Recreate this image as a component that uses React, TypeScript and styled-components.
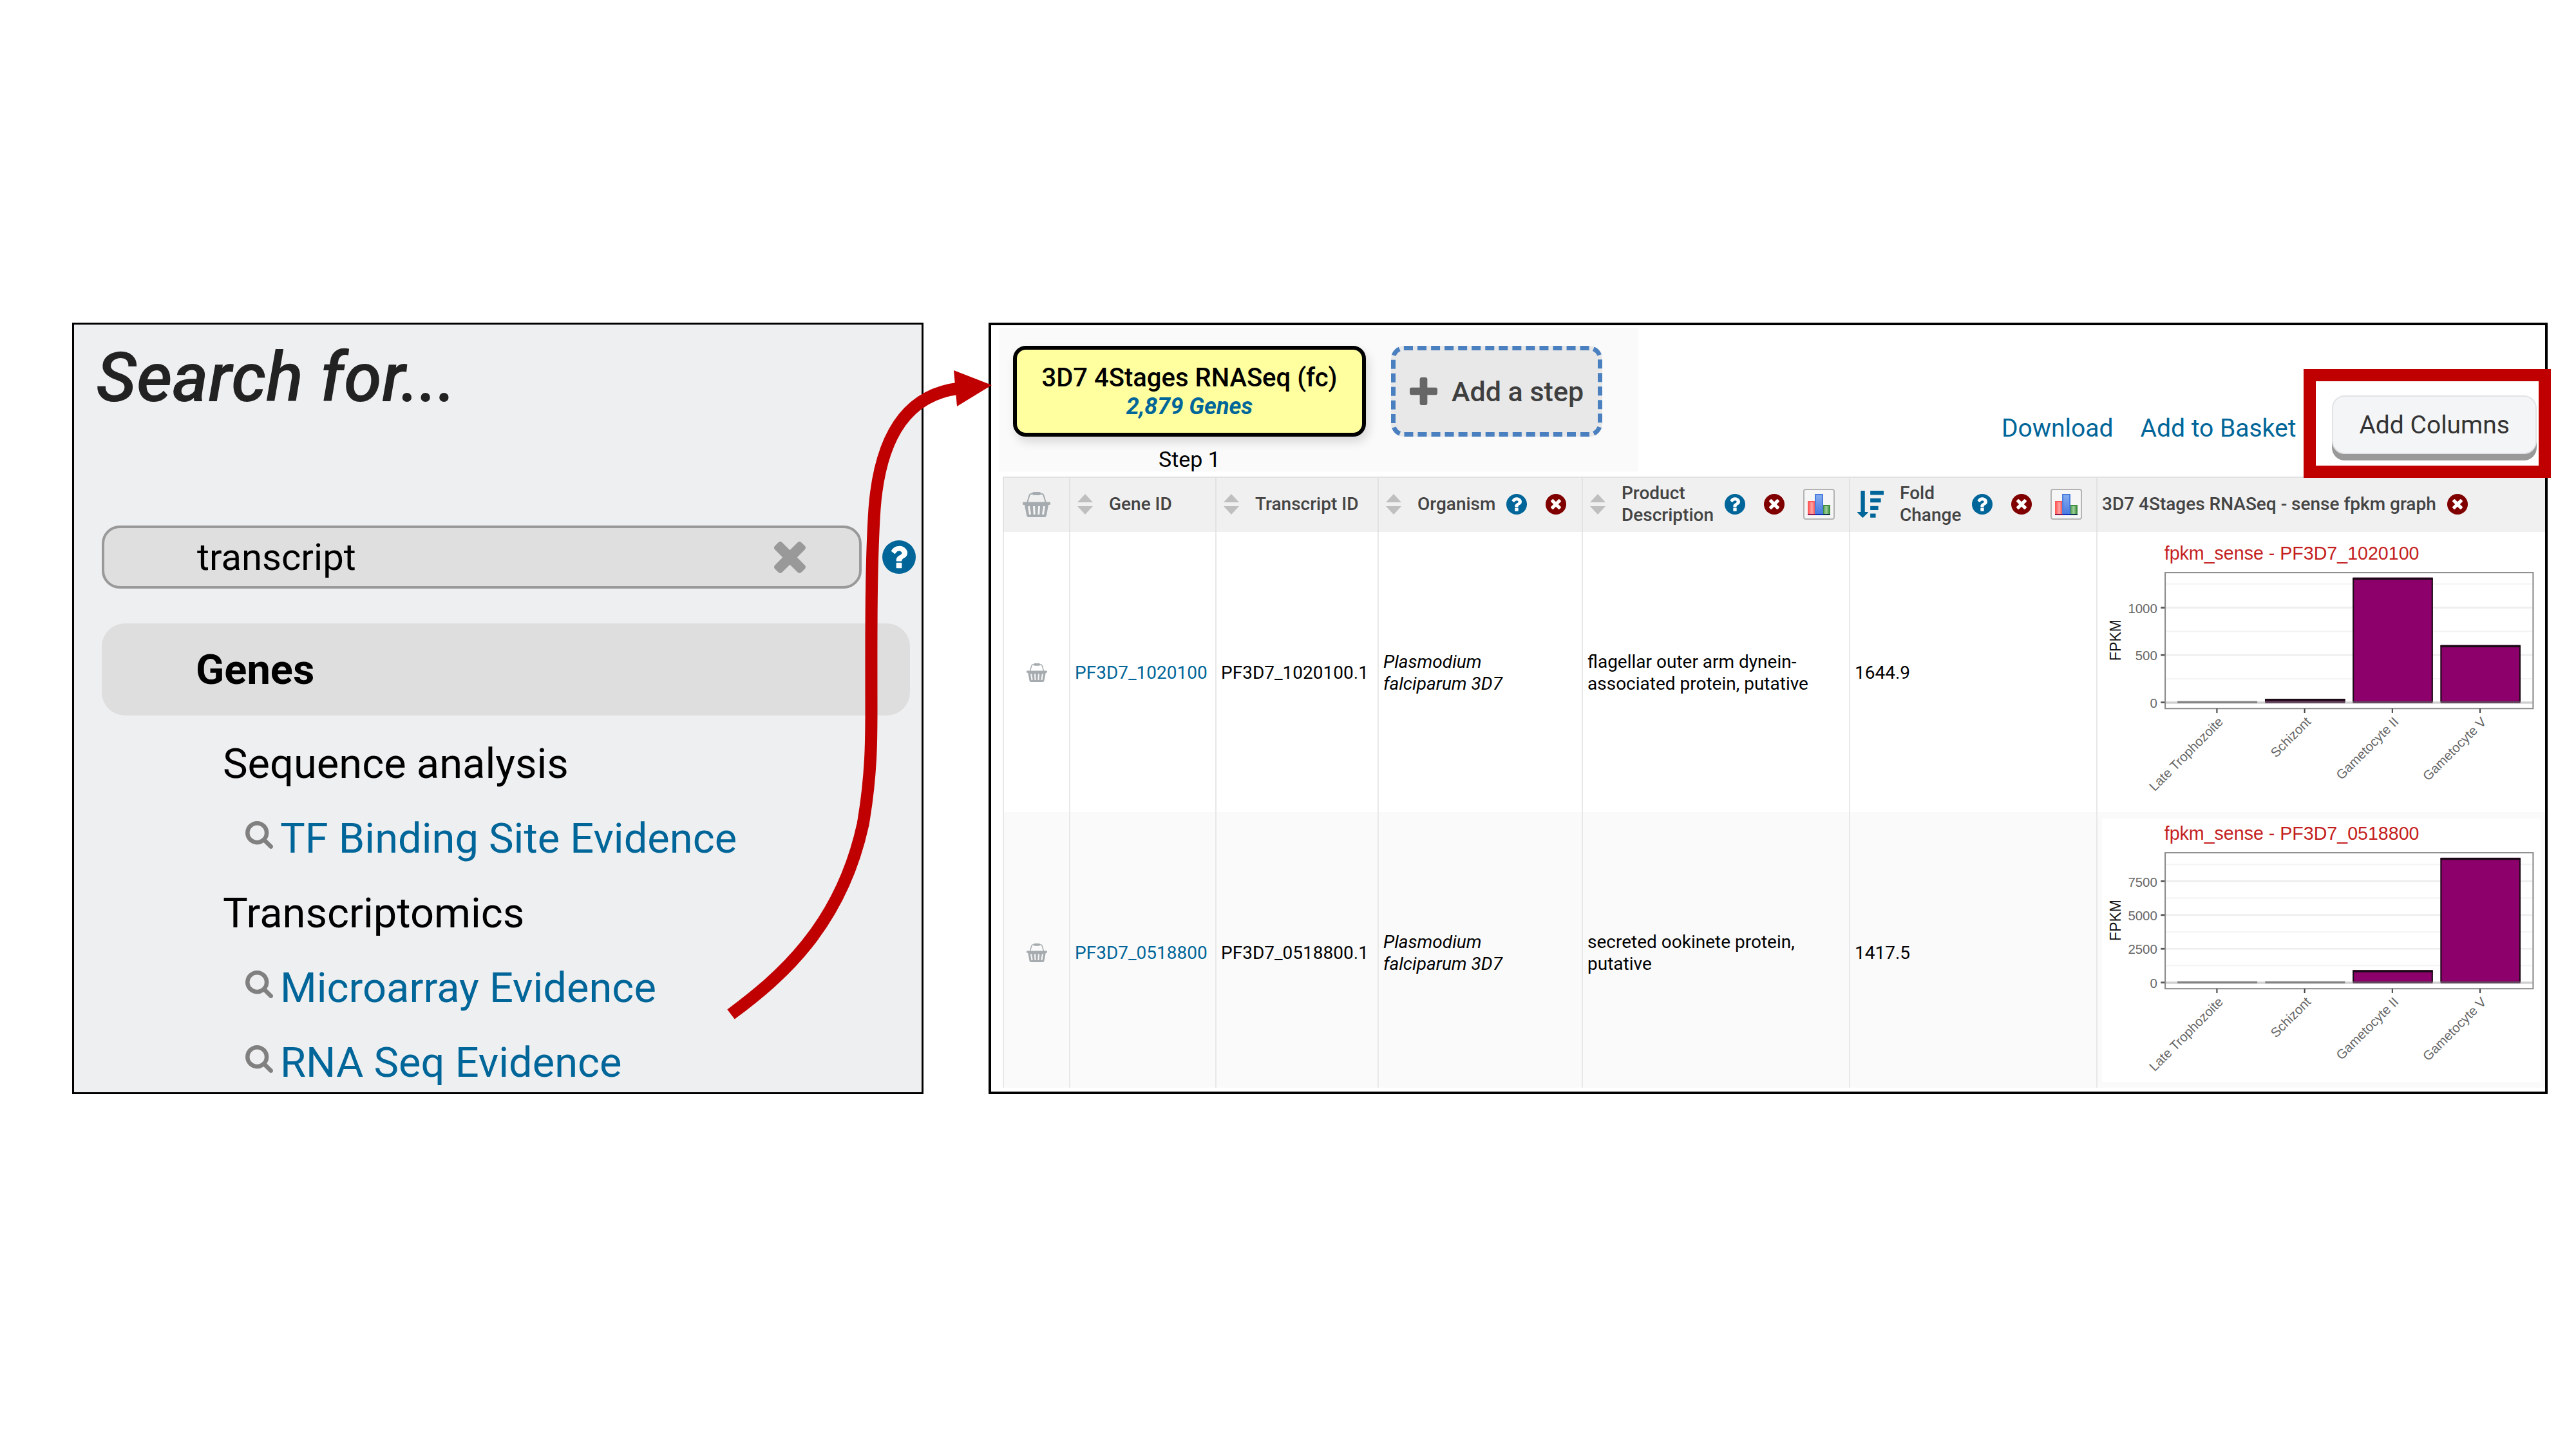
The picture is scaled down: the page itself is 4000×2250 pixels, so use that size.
import React from "react";
import styled, { createGlobalStyle } from "styled-components";

const GlobalStyle = createGlobalStyle`
  *, *::before, *::after { box-sizing: border-box; }
  body { margin: 0; background: #fff; font-family: Roboto, "Liberation Sans", sans-serif; color: #000; }
  button, input { font-family: inherit; }
  button { border: 0; background: none; padding: 0; cursor: pointer; }
  svg { display: block; flex: none; }
  a { text-decoration: none; }
`;

const LINK = "#069";
const ACCENT = "#c00000";

/* ---------- icons ---------- */

const HelpIcon = ({ size = 32 }: { size?: number }) => (
  <svg width={size} height={size} viewBox="128 128 1536 1536" aria-hidden="true">
    <circle cx="896" cy="896" r="768" fill={LINK} />
    <path
      fill="#fff"
      d="M1024 1376v-192q0-14-9-23t-23-9h-192q-14 0-23 9t-9 23v192q0 14 9 23t23 9h192q14 0 23-9t9-23zm256-672q0-88-55.500-163t-138.500-116-170-41q-243 0-371 213-15 24 8 42l132 100q7 6 19 6 16 0 25-12 53-68 86-92 34-24 86-24 48 0 85.500 26t37.500 59q0 38-20 61t-68 45q-63 28-115.500 86.500t-52.500 125.500v36q0 14 9 23t23 9h192q14 0 23-9t9-23q0-19 21.500-49.500t54.500-49.500q32-18 49-28.500t46-35 44.500-48 28-60.500 12.500-81z"
    />
  </svg>
);

const RemoveIcon = () => (
  <svg width="32" height="32" viewBox="128 128 1536 1536" aria-hidden="true">
    <circle cx="896" cy="896" r="768" fill="#800000" />
    <path
      fill="#fff"
      d="M1277 1122q0-26-19-45l-181-181 181-181q19-19 19-45 0-27-19-46l-90-90q-19-19-46-19-26 0-45 19l-181 181-181-181q-19-19-45-19-27 0-46 19l-90 90q-19 19-19 46 0 26 19 45l181 181-181 181q-19 19-19 45 0 27 19 46l90 90q19 19 46 19 26 0 45-19l181-181 181 181q19 19 45 19 27 0 46-19l90-90q19-19 19-46z"
    />
  </svg>
);

const ClearIcon = () => (
  <svg width="49" height="49" viewBox="302 366 1188 1188" fill="#999" aria-hidden="true">
    <path d="M1490 1322q0 40-28 68l-136 136q-28 28-68 28t-68-28l-294-294-294 294q-28 28-68 28t-68-28l-136-136q-28-28-28-68t28-68l294-294-294-294q-28-28-28-68t28-68l136-136q28-28 68-28t68 28l294 294 294-294q28-28 68-28t68 28l136 136q28 28 28 68t-28 68l-294 294 294 294q28 28 28 68z" />
  </svg>
);

const SearchIcon = () => (
  <svg width="43" height="43" viewBox="64 128 1664 1664" fill="#808080" aria-hidden="true">
    <path d="M1216 832q0-185-131.500-316.500t-316.500-131.500-316.500 131.500-131.500 316.500 131.500 316.500 316.500 131.500 316.500-131.500 131.500-316.500zm512 832q0 52-38 90t-90 38q-54 0-90-38l-343-342q-179 124-399 124-143 0-273.500-55.500t-225-150-150-225-55.500-273.500 55.500-273.500 150-225 225-150 273.500-55.500 273.500 55.500 225 150 150 225 55.500 273.500q0 220-124 399l343 343q37 37 37 90z" />
  </svg>
);

const PlusIcon = () => (
  <svg width="43" height="43" viewBox="192 128 1408 1408" fill="#666" aria-hidden="true">
    <path d="M1600 736v192q0 40-28 68t-68 28h-416v416q0 40-28 68t-68 28h-192q-40 0-68-28t-28-68v-416h-416q-40 0-68-28t-28-68v-192q0-40 28-68t68-28h416v-416q0-40 28-68t68-28h192q40 0 68 28t28 68v416h416q40 0 68 28t28 68z" />
  </svg>
);

const SortIcon = () => (
  <svg width="24" height="32" viewBox="0 0 24 32" fill="#bfbfbf" aria-hidden="true">
    <path d="M12 0L24 13H0zM12 32L0 19H24z" />
  </svg>
);

const SortDescIcon = () => (
  <svg width="41" height="42" viewBox="0 0 122 125" fill={LINK} aria-hidden="true">
    <path d="M16 0h19v98h14q2 2 0 4L28 123q-3 3-6 0L1 102q-2-2 0-4h15zM60 0h62v19H60zM60 35h49v19H60zM60 71h37v18H60zM60 106h25v18H60z" />
  </svg>
);

const BasketIcon = ({ width }: { width: number }) => (
  <svg width={width} height={Math.round(width * 0.9)} viewBox="0 0 43 39" aria-hidden="true">
    <path d="M7 17L10.500 5Q11.500 2.500 15 2.500H28Q31.500 2.500 32.500 5L36 17" fill="none" stroke="#a5abae" strokeWidth="2" />
    <rect x="15" y="0" width="13" height="5" rx="2" fill="#a5abae" />
    <path
      d="M1 15.500H42Q43 15.500 43 17V18.500Q43 20 41.500 20H40L37 36Q36.500 39 34 39H9Q6.500 39 6 36L3 20H1.500Q0 20 0 18.500V17Q0 15.500 1 15.500z"
      fill="#a5abae"
    />
    <path d="M9.500 22L11.500 35M17.500 22L18.200 35M25.500 22L24.800 35M33.500 22L31.500 35" stroke="#f4f4f4" strokeWidth="3" />
  </svg>
);

const HistogramIcon = () => (
  <svg width="35" height="33" viewBox="0 0 35 33" aria-hidden="true">
    <defs>
      <linearGradient id="red" x1="0" y1="0" x2="1" y2="0">
        <stop offset="0" stopColor="#ff5454" />
        <stop offset="0.5" stopColor="#ffa6a6" />
        <stop offset="1" stopColor="#f04848" />
      </linearGradient>
      <linearGradient id="blue" x1="0" y1="0" x2="0" y2="1">
        <stop offset="0" stopColor="#86aef0" />
        <stop offset="1" stopColor="#4878e0" />
      </linearGradient>
      <linearGradient id="green" x1="0" y1="0" x2="1" y2="0">
        <stop offset="0" stopColor="#4f9f4f" />
        <stop offset="0.5" stopColor="#9fd09a" />
        <stop offset="1" stopColor="#3b8a3b" />
      </linearGradient>
    </defs>
    <rect x="1" y="12" width="11" height="20" fill="url(#red)" stroke="#ff5a5a" strokeWidth="2" />
    <rect x="24" y="18" width="10" height="14" fill="url(#green)" stroke="#3f8f3f" strokeWidth="2" />
    <rect x="12" y="1" width="11" height="31" fill="url(#blue)" stroke="#4a7de0" strokeWidth="2" />
    <rect x="0" y="31" width="12" height="2" fill="#8a1850" />
    <rect x="12" y="31" width="12" height="2" fill="#1030c0" />
    <rect x="24" y="31" width="11" height="2" fill="#103050" />
  </svg>
);

/* ---------- page ---------- */

const Board = styled.main`
  display: grid;
  grid-template-columns: 1322fr 2421fr;
  column-gap: 101px;
  padding: 501px 44px 0 112px;
`;

const SearchPanel = styled.section`
  position: relative;
  border: 3px solid #000;
  background: #eeeff1;
  padding: 23px 9px 0 34px;
`;

const SearchTitle = styled.h1`
  margin: 0;
  font-size: 107px;
  line-height: 120px;
  font-weight: 500;
  font-style: italic;
  color: #222;
`;

const SearchBody = styled.div`
  padding: 169px 0 0 9px;
`;

const SearchRow = styled.form`
  display: flex;
  align-items: center;
  gap: 32px;
`;

const Field = styled.div`
  flex: 1;
  display: flex;
  align-items: center;
  height: 98px;
  padding: 0 83px 0 144px;
  border: 4px solid #999;
  border-radius: 28px;
  background: #dfdfdf;
`;

const FieldInput = styled.input`
  flex: 1;
  min-width: 0;
  padding: 0;
  border: 0;
  outline: 0;
  background: transparent;
  font-size: 58px;
  color: #000;
`;

const Category = styled.h2`
  display: flex;
  align-items: center;
  height: 143px;
  margin: 54px 9px 37px 0;
  padding-left: 146px;
  border-radius: 36px;
  background: #dedede;
  font-size: 65px;
  font-weight: 700;
`;

const Results = styled.ul`
  display: flex;
  flex-direction: column;
  gap: 40px;
  margin: 0;
  padding: 0 0 0 188px;
  list-style: none;
  font-size: 65px;
  line-height: 76px;
`;

const ResultLink = styled.a`
  display: flex;
  align-items: center;
  gap: 11px;
  padding-left: 35px;
  color: ${LINK};

  svg {
    margin-bottom: 12px;
  }
`;

const FlowArrow = styled.svg`
  position: absolute;
  top: 56px;
  right: -119px;
  z-index: 2;
  pointer-events: none;
`;

const ResultPanel = styled.section`
  border: 4px solid #000;
  background: #fff;
  padding: 4px 0 6px;
`;

const TopRow = styled.div`
  display: flex;
  justify-content: space-between;
  align-items: flex-start;
  padding: 0 13px 8px 12px;
`;

const Strategy = styled.div`
  display: flex;
  align-items: flex-start;
  gap: 39px;
  padding: 28px 56px 0 22px;
  background: #fafafa;
`;

const Step = styled.div`
  display: flex;
  flex-direction: column;
  align-items: center;
  gap: 16px;
  font-size: 34px;
  line-height: 38px;
`;

const StepBox = styled.button`
  display: flex;
  flex-direction: column;
  align-items: center;
  justify-content: center;
  width: 548px;
  height: 141px;
  padding-top: 3px;
  border: 6px solid #000;
  border-radius: 20px;
  background: #ffffa0;
  box-shadow: 4px 8px 16px rgba(0, 0, 0, 0.14);
  line-height: 44px;
`;

const StepName = styled.span`
  font-size: 40px;
  font-weight: 500;
  color: #000;
`;

const StepCount = styled.span`
  font-size: 36px;
  font-weight: 700;
  font-style: italic;
  color: ${LINK};
`;

const AddStep = styled.button`
  display: flex;
  align-items: center;
  justify-content: center;
  gap: 22px;
  width: 328px;
  height: 141px;
  border: 7px dashed #4a80c0;
  border-radius: 20px;
  background: #e8e8e8;
  font-size: 43px;
  font-weight: 500;
  color: #3f3f3f;
`;

const Actions = styled.div`
  display: flex;
  align-items: center;
  gap: 42px;
  padding-top: 105px;
  font-size: 39px;
`;

const ActionLink = styled.a`
  color: ${LINK};
`;

const Highlighted = styled.div`
  position: relative;
  margin-left: 14px;
  padding-bottom: 10px;

  &::after {
    content: "";
    position: absolute;
    inset: -41px -22px -27px -44px;
    border: 19px solid ${ACCENT};
    pointer-events: none;
  }
`;

const ColumnsButton = styled.button`
  display: block;
  height: 91px;
  padding: 0 40px;
  border: 2px solid #e2e3e6;
  border-radius: 20px;
  background: #f4f5f7;
  box-shadow: 0 10px 0 #999;
  font-size: 39px;
  color: #333;
`;

/* ---------- table ---------- */

const TableClip = styled.div`
  max-height: 949px;
  margin-left: 18px;
  overflow: hidden;
`;

const Table = styled.table`
  width: 100%;
  table-layout: fixed;
  border-collapse: separate;
  border-spacing: 0;
  font-size: 28px;
  line-height: 34px;
`;

const Col = styled.col<{ $width?: number }>`
  width: ${(p) => (p.$width ? `${p.$width}px` : "auto")};
`;

const HeadCell = styled.th`
  height: 86px;
  padding: 0 7px 2px;
  border-left: 2px solid #e2e2e2;
  border-top: 2px solid #e2e2e2;
  background: #f0f0f0;
  font-weight: 500;
  text-align: left;
  white-space: nowrap;
  color: #444;
`;

const HeadContent = styled.div<{ $centered?: boolean }>`
  display: flex;
  align-items: center;
  justify-content: ${(p) => (p.$centered ? "center" : "flex-start")};
`;

const SortButton = styled.button`
  margin: 0 25px 0 4px;
`;

const HeadTools = styled.div`
  display: flex;
  align-items: center;
  gap: 29px;
  margin-left: 17px;
`;

const HistogramButton = styled.button`
  display: flex;
  align-items: center;
  justify-content: center;
  width: 49px;
  height: 48px;
  border: 2px solid #b3b3b3;
  border-radius: 4px;
  background: #f6f6f6;
`;

const Row = styled.tr`
  background: #fff;

  &:nth-child(even) {
    background: #fafafa;
  }
`;

const Cell = styled.td`
  height: 435px;
  padding: 2px 7px 0;
  border-left: 2px solid #e8e8e8;
  vertical-align: middle;
`;

const GraphCell = styled(Cell)`
  padding-top: 10px;
  vertical-align: top;
`;

const GeneLink = styled.a`
  color: ${LINK};
`;

const BasketButton = styled.button`
  display: block;
  margin: 0 auto;
`;

const Graph = styled.svg`
  width: 100%;
  height: auto;
  background: #fff;
  font-family: "Liberation Sans", Arial, sans-serif;
`;

type ChartProps = { gene: string; unit: number; labels: number; step: number; values: number[] };

const STAGES = ["Late Trophozoite", "Schizont", "Gametocyte II", "Gametocyte V"];

const ExpressionChart = ({ gene, unit, labels, step, values }: ChartProps) => {
  const zero = 187;
  const top = 39;
  const yOf = (v: number) => zero - (v / step) * unit;
  const majors = Array.from({ length: labels }, (_, i) => i * step);
  const minors = Array.from({ length: labels }, (_, i) => (i + 0.5) * step);
  return (
    <Graph viewBox="0 0 500 300" role="img" aria-label={`FPKM bar chart for ${gene}`}>
      <text x="71" y="24" fontSize="21" fill="#c41e1e">
        fpkm_sense - {gene}
      </text>
      <text transform="translate(21 116) rotate(-90)" textAnchor="middle" fontSize="17" fill="#111">
        FPKM
      </text>
      {minors.map((v) => (
        <line key={v} x1="72" x2="491" y1={yOf(v)} y2={yOf(v)} stroke="#f4f4f4" strokeWidth="1.500" />
      ))}
      {majors.map((v) => (
        <g key={v}>
          <line x1="72" x2="491" y1={yOf(v)} y2={yOf(v)} stroke="#eee" strokeWidth="2" />
          <line x1="67" x2="72" y1={yOf(v)} y2={yOf(v)} stroke="#555" strokeWidth="2" />
          <text x="63" y={yOf(v) + 6} textAnchor="end" fontSize="15" fill="#666">
            {v}
          </text>
        </g>
      ))}
      {values.map((v, i) => {
        const x = 86 + i * 100;
        const height = (v / step) * unit;
        return height < 1 ? null : (
          <g key={i}>
            <rect x={x} y={zero - height} width="91" height={height} fill="#8d006b" />
            <path
              d={`M${x + 0.5} ${zero}V${zero - height + 1}H${x + 90.5}V${zero}`}
              fill="none"
              stroke="#1a0a16"
              strokeWidth="1.500"
            />
            <rect x={x} y={zero - height} width="91" height="2.500" fill="#1a0a16" />
          </g>
        );
      })}
      <rect x="72" y={zero - 1} width="419" height="2.500" fill="#c8c8c8" opacity="0.8" />
      {values.map((v, i) => (
        <rect key={i} x={86 + i * 100} y={zero - 1.5} width="91" height="2.500" fill={(v / step) * unit < 1 ? "#7c7c7c" : "#5a3c54"} opacity="0.9" />
      ))}
      <rect x="72" y={top} width="419.500" height="155" fill="none" stroke="#8a8a8a" strokeWidth="1.500" />
      {STAGES.map((name, i) => (
        <g key={name}>
          <line x1={131 + i * 100} x2={131 + i * 100} y1="194" y2="199" stroke="#444" strokeWidth="1.500" />
          <text transform={`translate(${139 + i * 100} 210) rotate(-45)`} textAnchor="end" fontSize="15" fill="#666">
            {name}
          </text>
        </g>
      ))}
    </Graph>
  );
};

type Column = { name: React.ReactNode; label: string; sort?: "none" | "desc"; help?: boolean; remove?: boolean; histogram?: boolean };

const COLUMNS: Column[] = [
  { name: "Gene ID", label: "Gene ID", sort: "none" },
  { name: "Transcript ID", label: "Transcript ID", sort: "none" },
  { name: "Organism", label: "Organism", sort: "none", help: true, remove: true },
  { name: <>Product<br />Description</>, label: "Product Description", sort: "none", help: true, remove: true, histogram: true },
  { name: <>Fold<br />Change</>, label: "Fold Change", sort: "desc", help: true, remove: true, histogram: true },
  { name: "3D7 4Stages RNASeq - sense fpkm graph", label: "fpkm graph", remove: true },
];

const GENES = [
  {
    id: "PF3D7_1020100",
    product: "flagellar outer arm dynein-associated protein, putative",
    fold: "1644.9",
    chart: { unit: 54, labels: 3, step: 500, values: [4, 38, 1318, 605] },
  },
  {
    id: "PF3D7_0518800",
    product: "secreted ookinete protein, putative",
    fold: "1417.5",
    chart: { unit: 38.5, labels: 4, step: 2500, values: [10, 12, 920, 9240] },
  },
];

const SEARCHES = [
  { group: "Sequence analysis", links: ["TF Binding Site Evidence"] },
  { group: "Transcriptomics", links: ["Microarray Evidence", "RNA Seq Evidence"] },
];

export default function App() {
  return (
    <>
      <GlobalStyle />
      <Board>
        <SearchPanel>
          <SearchTitle>Search for...</SearchTitle>
          <SearchBody>
            <SearchRow onSubmit={(e) => e.preventDefault()}>
              <Field>
                <FieldInput type="text" defaultValue="transcript" aria-label="Search for" />
                <button type="button" aria-label="Clear search">
                  <ClearIcon />
                </button>
              </Field>
              <button type="button" aria-label="Search help">
                <HelpIcon size={52} />
              </button>
            </SearchRow>
            <Category>Genes</Category>
            <Results>
              {SEARCHES.map(({ group, links }) => (
                <React.Fragment key={group}>
                  <li>{group}</li>
                  {links.map((link) => (
                    <li key={link}>
                      <ResultLink href="#">
                        <SearchIcon />
                        {link}
                      </ResultLink>
                    </li>
                  ))}
                </React.Fragment>
              ))}
            </Results>
          </SearchBody>
          <FlowArrow width="430" height="1030" viewBox="1120 560 430 1030" aria-hidden="true">
            <path
              d="M1135 1575C1210 1519 1305 1440 1340 1280C1354 1200 1353 1140 1353 1090C1353 1000 1352 880 1358 790C1367 672 1412 612 1490 603"
              fill="none"
              stroke={ACCENT}
              strokeWidth="19"
            />
            <path d="M1481 575L1540 598L1486 631z" fill={ACCENT} />
          </FlowArrow>
        </SearchPanel>

        <ResultPanel>
          <TopRow>
            <Strategy>
              <Step>
                <StepBox type="button">
                  <StepName>3D7 4Stages RNASeq (fc)</StepName>
                  <StepCount>2,879 Genes</StepCount>
                </StepBox>
                Step 1
              </Step>
              <AddStep type="button">
                <PlusIcon />
                Add a step
              </AddStep>
            </Strategy>
            <Actions>
              <ActionLink href="#">Download</ActionLink>
              <ActionLink href="#">Add to Basket</ActionLink>
              <Highlighted>
                <ColumnsButton type="button">Add Columns</ColumnsButton>
              </Highlighted>
            </Actions>
          </TopRow>

          <TableClip>
            <Table>
              <colgroup>
                <Col $width={103} />
                <Col $width={227} />
                <Col $width={252} />
                <Col $width={317} />
                <Col $width={415} />
                <Col $width={384} />
                <Col />
              </colgroup>
              <thead>
                <tr>
                  <HeadCell aria-label="Basket">
                    <HeadContent $centered>
                      <BasketIcon width={43} />
                    </HeadContent>
                  </HeadCell>
                  {COLUMNS.map((c) => (
                    <HeadCell key={c.label}>
                      <HeadContent>
                        {c.sort && (
                          <SortButton type="button" aria-label={`Sort by ${c.label}`}>
                            {c.sort === "desc" ? <SortDescIcon /> : <SortIcon />}
                          </SortButton>
                        )}
                        <span>{c.name}</span>
                        {c.remove && (
                          <HeadTools>
                            {c.help && (
                              <button type="button" aria-label={`About ${c.label}`}>
                                <HelpIcon />
                              </button>
                            )}
                            <button type="button" aria-label={`Remove ${c.label}`}>
                              <RemoveIcon />
                            </button>
                            {c.histogram && (
                              <HistogramButton type="button" aria-label={`Histogram of ${c.label}`}>
                                <HistogramIcon />
                              </HistogramButton>
                            )}
                          </HeadTools>
                        )}
                      </HeadContent>
                    </HeadCell>
                  ))}
                </tr>
              </thead>
              <tbody>
                {GENES.map((g) => (
                  <Row key={g.id}>
                    <Cell>
                      <BasketButton type="button" aria-label={`Add ${g.id} to basket`}>
                        <BasketIcon width={32} />
                      </BasketButton>
                    </Cell>
                    <Cell>
                      <GeneLink href="#">{g.id}</GeneLink>
                    </Cell>
                    <Cell>{g.id}.1</Cell>
                    <Cell>
                      <i>
                        Plasmodium
                        <br />
                        falciparum 3D7
                      </i>
                    </Cell>
                    <Cell>{g.product}</Cell>
                    <Cell>{g.fold}</Cell>
                    <GraphCell>
                      <ExpressionChart gene={g.id} {...g.chart} />
                    </GraphCell>
                  </Row>
                ))}
              </tbody>
            </Table>
          </TableClip>
        </ResultPanel>
      </Board>
    </>
  );
}
